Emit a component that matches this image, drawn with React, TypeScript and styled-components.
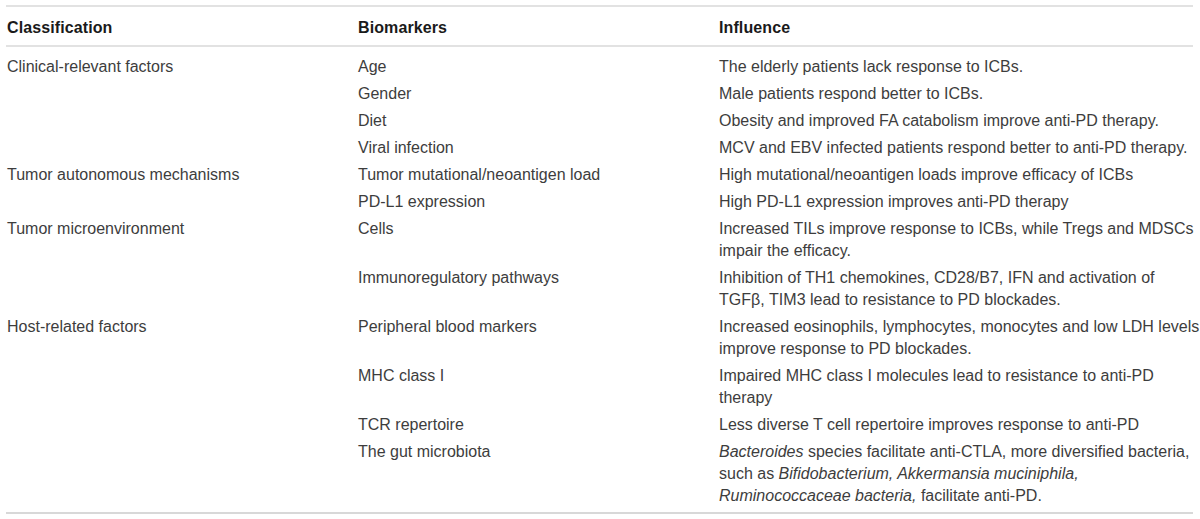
import React from "react";
import styled, { createGlobalStyle } from "styled-components";

const Global = createGlobalStyle`
  html, body { margin: 0; padding: 0; background: #ffffff; }
  body { font-family: "Liberation Sans", Arial, sans-serif; }
`;

const Page = styled.div`
  padding: 5px 7px 0 6px;
  width: 1200px;
  box-sizing: border-box;
`;

const Table = styled.table`
  width: 1187px;
  border-collapse: collapse;
  table-layout: fixed;
  border-top: 2px solid #e2e2e2;
  border-bottom: 2px solid #d8d8d8;
  font-size: 16px;
  color: #3d3d3d;
`;

const HeadCell = styled.th<{ $w?: number }>`
  width: ${(p) => (p.$w ? `${p.$w}px` : "auto")};
  text-align: left;
  font-weight: bold;
  color: #1a1a1a;
  padding: 11px 0 8px 1px;
  line-height: 19px;
  letter-spacing: 0.1px;
  border-bottom: 2px solid #e2e2e2;
`;

const Cell = styled.td<{ $first?: boolean; $last?: boolean }>`
  vertical-align: top;
  padding: ${(p) => (p.$first ? "9px" : "2px")} 0 ${(p) => (p.$last ? "5px" : "3px")} 1px;
  line-height: 22px;
`;

const Line = styled.span`
  display: block;
  white-space: nowrap;
`;

type Row = { cls?: string; bio: string; inf: React.ReactNode[] };

const rows: Row[] = [
  { cls: "Clinical-relevant factors", bio: "Age", inf: ["The elderly patients lack response to ICBs."] },
  { bio: "Gender", inf: ["Male patients respond better to ICBs."] },
  { bio: "Diet", inf: ["Obesity and improved FA catabolism improve anti-PD therapy."] },
  { bio: "Viral infection", inf: ["MCV and EBV infected patients respond better to anti-PD therapy."] },
  { cls: "Tumor autonomous mechanisms", bio: "Tumor mutational/neoantigen load", inf: ["High mutational/neoantigen loads improve efficacy of ICBs"] },
  { bio: "PD-L1 expression", inf: ["High PD-L1 expression improves anti-PD therapy"] },
  {
    cls: "Tumor microenvironment",
    bio: "Cells",
    inf: ["Increased TILs improve response to ICBs, while Tregs and MDSCs", "impair the efficacy."],
  },
  {
    bio: "Immunoregulatory pathways",
    inf: ["Inhibition of TH1 chemokines, CD28/B7, IFN and activation of", "TGFβ, TIM3 lead to resistance to PD blockades."],
  },
  {
    cls: "Host-related factors",
    bio: "Peripheral blood markers",
    inf: ["Increased eosinophils, lymphocytes, monocytes and low LDH levels", "improve response to PD blockades."],
  },
  { bio: "MHC class I", inf: ["Impaired MHC class I molecules lead to resistance to anti-PD", "therapy"] },
  { bio: "TCR repertoire", inf: ["Less diverse T cell repertoire improves response to anti-PD"] },
  {
    bio: "The gut microbiota",
    inf: [
      <>
        <em>Bacteroides</em> species facilitate anti-CTLA, more diversified bacteria,
      </>,
      <>
        such as <em>Bifidobacterium, Akkermansia muciniphila,</em>
      </>,
      <>
        <em>Ruminococcaceae bacteria,</em> facilitate anti-PD.
      </>,
    ],
  },
];

export default function App() {
  return (
    <>
      <Global />
      <Page>
        <Table>
          <thead>
            <tr>
              <HeadCell $w={350}>Classification</HeadCell>
              <HeadCell $w={360}>Biomarkers</HeadCell>
              <HeadCell>Influence</HeadCell>
            </tr>
          </thead>
          <tbody>
            {rows.map((r, i) => {
              const first = i === 0;
              const last = i === rows.length - 1;
              return (
                <tr key={i}>
                  <Cell $first={first} $last={last}>{r.cls ?? ""}</Cell>
                  <Cell $first={first} $last={last}>{r.bio}</Cell>
                  <Cell $first={first} $last={last}>
                    {r.inf.map((l, j) => (
                      <Line key={j}>{l}</Line>
                    ))}
                  </Cell>
                </tr>
              );
            })}
          </tbody>
        </Table>
      </Page>
    </>
  );
}
